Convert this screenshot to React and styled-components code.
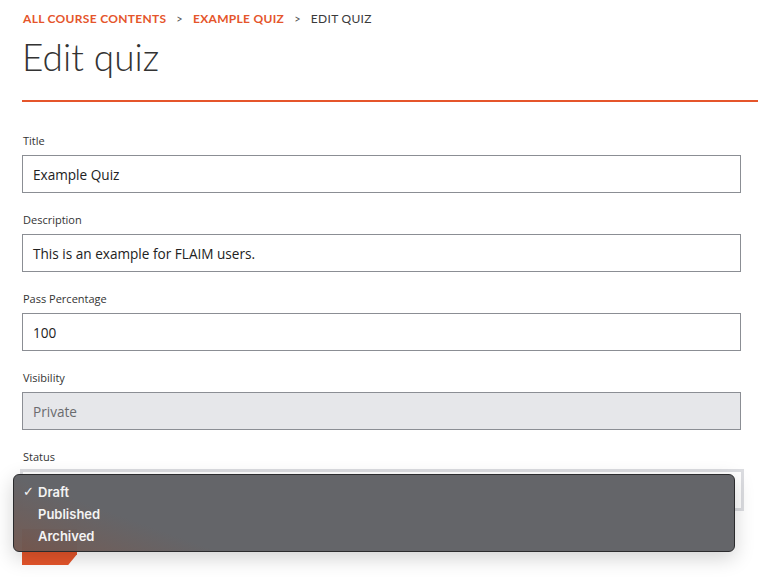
import React from "react";
import styled, { createGlobalStyle } from "styled-components";

const GlobalStyle = createGlobalStyle`
  body {
    margin: 0;
    background: #fff;
    font-family: "Lato", "Liberation Sans", sans-serif;
    color: #333;
  }
`;

const ORANGE = "#e5552b";

const Page = styled.div`
  position: relative;
  width: 758px;
  height: 579px;
  overflow: hidden;
`;

const Header = styled.header`
  margin-left: 22px;
  padding-top: 11px;
  border-bottom: 2px solid ${ORANGE};
`;

const Breadcrumb = styled.nav`
  display: flex;
  align-items: center;
  gap: 10px;
  padding-left: 1px;
  font-size: 12px;
  line-height: 16px;
  letter-spacing: 0.3px;
  text-transform: uppercase;
`;

const Crumb = styled.span`
  color: ${(p) => (p.$current ? "#3a3a3a" : ORANGE)};
  font-weight: ${(p) => (p.$current ? 400 : 700)};
`;

const Sep = styled.span`
  color: #555;
  font-size: 11px;
`;

const Title = styled.h1`
  margin: 7px 0 0;
  font-size: 37px;
  line-height: 46px;
  font-weight: 300;
  color: #333;
  padding-bottom: 20px;
`;

const Form = styled.form`
  padding: 31px 17px 0 22px;
  display: flex;
  flex-direction: column;
  gap: 19px;
  font-family: "Open Sans", "Liberation Sans", sans-serif;
`;

const Field = styled.div`
  display: flex;
  flex-direction: column;
  gap: 6px;
`;

const Label = styled.label`
  font-size: 11px;
  line-height: 16px;
  padding-left: 1px;
  color: #333;
`;

const Input = styled.div`
  box-sizing: border-box;
  height: 38px;
  border: 1px solid #8b8e94;
  background: ${(p) => (p.$disabled ? "#e6e7ea" : "#fff")};
  color: ${(p) => (p.$disabled ? "#6a6b6e" : "#222")};
  font-size: 13.6px;
  display: flex;
  align-items: center;
  padding: 0 10px;
`;

const SelectRing = styled.div`
  box-sizing: border-box;
  height: 42px;
  margin: -2px -3px 0 -2px;
  border: 3px solid #dcdde1;
  background: #fff;
`;

const SubmitButton = styled.div`
  width: 55px;
  height: 36px;
  margin-top: 12px;
  background: ${ORANGE};
  clip-path: polygon(0 0, 100% 0, 100% 70%, 84% 100%, 0 100%);
`;

const Menu = styled.ul`
  position: absolute;
  left: 13px;
  top: 474px;
  width: 722px;
  box-sizing: border-box;
  height: 78px;
  margin: 0;
  padding: 6px 0 0;
  list-style: none;
  background: linear-gradient(20deg, rgba(112, 86, 78, 0.97) 0%, #646569 22%, #646569 100%);
  border: 1px solid #2b2b2d;
  border-radius: 6px;
  box-shadow: 0 6px 20px rgba(0, 0, 0, 0.18);
  font-family: "Inter", "Liberation Sans", sans-serif;
`;

const MenuItem = styled.li`
  position: relative;
  height: 22px;
  line-height: 22px;
  padding-left: 24px;
  font-size: 13px;
  font-weight: 600;
  color: #f4f4f4;
`;

const Check = styled.span`
  position: absolute;
  left: 9px;
  top: 0;
  font-family: "DejaVu Sans", sans-serif;
  font-size: 13px;
  font-weight: 400;
`;

const fields = [
  { label: "Title", value: "Example Quiz" },
  { label: "Description", value: "This is an example for FLAIM users." },
  { label: "Pass Percentage", value: "100" },
  { label: "Visibility", value: "Private", disabled: true },
];

const options = ["Draft", "Published", "Archived"];

export default function App() {
  return (
    <Page>
      <GlobalStyle />
      <Header>
        <Breadcrumb>
          <Crumb>All course contents</Crumb>
          <Sep>&gt;</Sep>
          <Crumb>Example quiz</Crumb>
          <Sep>&gt;</Sep>
          <Crumb $current>Edit quiz</Crumb>
        </Breadcrumb>
        <Title>Edit quiz</Title>
      </Header>
      <Form>
        {fields.map((f) => (
          <Field key={f.label}>
            <Label>{f.label}</Label>
            <Input $disabled={f.disabled}>{f.value}</Input>
          </Field>
        ))}
        <Field>
          <Label>Status</Label>
          <SelectRing />
          <SubmitButton />
        </Field>
      </Form>
      <Menu>
        {options.map((o, i) => (
          <MenuItem key={o}>
            {i === 0 && <Check>✓</Check>}
            {o}
          </MenuItem>
        ))}
      </Menu>
    </Page>
  );
}
